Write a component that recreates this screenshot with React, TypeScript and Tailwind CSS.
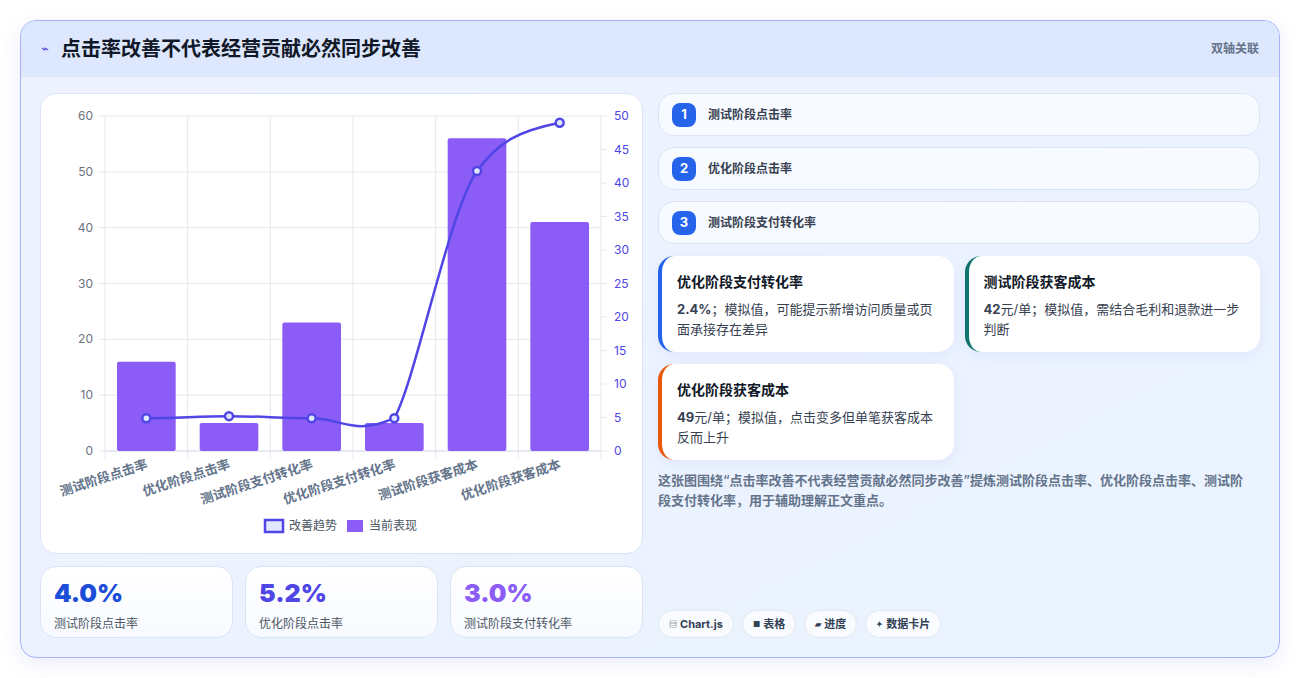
import React from 'react';

const font = { fontFamily: 'Inter, "Noto Sans CJK SC", sans-serif' };

const cats = ['测试阶段点击率', '优化阶段点击率', '测试阶段支付转化率', '优化阶段支付转化率', '测试阶段获客成本', '优化阶段获客成本'];
const bars = [16, 5, 23, 5, 56, 41];
const line = [4.9, 5.2, 4.9, 4.9, 41.8, 49];

const Chart = () => {
  // card-local coordinates
  const L = 64, R = 560, T = 22, B = 357;
  const cw = (R - L) / 6;
  const yl = (v: number) => B - (v / 60) * (B - T);
  const yr = (v: number) => B - (v / 50) * (B - T);
  const pts = line.map((v, i) => [L + cw * (i + 0.5), yr(v)]);
  const d =
    `M${pts[0][0]},${pts[0][1]} C${pts[0][0] + 30},${pts[0][1]} ${pts[1][0] - 30},${pts[1][1]} ${pts[1][0]},${pts[1][1]} ` +
    `C${pts[1][0] + 30},${pts[1][1]} ${pts[2][0] - 30},${pts[2][1]} ${pts[2][0]},${pts[2][1]} ` +
    `C${pts[2][0] + 30},${pts[2][1]} ${pts[3][0] - 40},${pts[3][1] + 18} ${pts[3][0]},${pts[3][1]} ` +
    `C${pts[3][0] + 22},${pts[3][1] - 40} ${pts[4][0] - 28},${pts[4][1] + 40} ${pts[4][0]},${pts[4][1]} ` +
    `C${pts[4][0] + 22},${pts[4][1] - 30} ${pts[5][0] - 40},${pts[5][1] + 8} ${pts[5][0]},${pts[5][1]}`;
  return (
    <svg width="602" height="460" className="block" style={font}>
      {[0, 10, 20, 30, 40, 50, 60].map((v) => (
        <g key={v}>
          <line x1={L} x2={R} y1={yl(v)} y2={yl(v)} stroke={v === 0 ? '#cbd5e1' : '#e5e7eb'} />
          <line x1={L - 6} x2={L} y1={yl(v)} y2={yl(v)} stroke="#e5e7eb" />
          <text x={L - 12} y={yl(v) + 4} textAnchor="end" fontSize="12" fill="#6b7280">{v}</text>
        </g>
      ))}
      {[0, 5, 10, 15, 20, 25, 30, 35, 40, 45, 50].map((v) => (
        <g key={v}>
          <line x1={R} x2={R + 6} y1={yr(v)} y2={yr(v)} stroke="#e5e7eb" />
          <text x={R + 13} y={yr(v) + 4} fontSize="12" fill="#4f46e5">{v}</text>
        </g>
      ))}
      {[0, 1, 2, 3, 4, 5, 6].map((i) => (
        <line key={i} x1={L + cw * i} x2={L + cw * i} y1={T} y2={B + 8} stroke="#e5e7eb" />
      ))}
      {bars.map((v, i) => (
        <rect key={i} x={L + cw * i + 12} y={yl(v)} width={cw - 24} height={B - yl(v)} fill="#8b5cf6" rx="2" />
      ))}
      <path d={d} fill="none" stroke="#4f46e5" strokeWidth="2.5" />
      {pts.map(([x, y], i) => (
        <circle key={i} cx={x} cy={y} r="4" fill="#e0e7ff" stroke="#4f46e5" strokeWidth="2.5" />
      ))}
      {cats.map((c, i) => (
        <text key={c} x={L + cw * (i + 0.5) + 2} y={B + 17} textAnchor="end" fontSize="13" fontWeight="600" fill="#64748b"
          transform={`rotate(-18 ${L + cw * (i + 0.5) + 2} ${B + 17})`}>{c}</text>
      ))}
      <rect x="224" y="426" width="18" height="12" fill="#e0e7ff" stroke="#4f46e5" strokeWidth="2.5" />
      <text x="248" y="436" fontSize="12" fill="#4b5563">改善趋势</text>
      <rect x="306" y="426" width="16" height="12" fill="#8b5cf6" />
      <text x="328" y="436" fontSize="12" fill="#4b5563">当前表现</text>
    </svg>
  );
};

const Stat = ({ v, l, c }: { v: string; l: string; c: string }) => (
  <div className="flex-1 h-[72px] rounded-2xl border border-[#dbe4f5] bg-gradient-to-b from-white to-[#f7faff] px-[13px] pt-[12px]">
    <div className={`text-[25px] leading-[28px] font-black ${c}`}>{v}</div>
    <div className="text-[12px] text-[#4b5563] mt-[8px]">{l}</div>
  </div>
);

const Step = ({ n, t }: { n: number; t: string }) => (
  <div className="h-[43px] rounded-2xl border border-[#dbe4f5] bg-[#f7faff] flex items-center px-[13px] gap-[12px]">
    <div className="w-[24px] h-[24px] rounded-lg bg-[#2563eb] text-white text-[13px] font-bold flex items-center justify-center">{n}</div>
    <div className="text-[12px] font-bold text-[#374151]">{t}</div>
  </div>
);

const Note = ({ t, b, s, c }: { t: string; b: string; s: string; c: string }) => (
  <div className={`h-[96px] rounded-2xl bg-white border-l-4 ${c} shadow-[0_4px_14px_rgba(99,102,241,0.08)] pl-[15px] pr-[14px] pt-[16px]`}>
    <div className="text-[14px] font-bold text-[#111827] leading-[20px]">{t}</div>
    <p className="text-[13px] text-[#374151] leading-[20px] mt-[7px]"><span className="font-bold">{b}</span>{s}</p>
  </div>
);

const Tag = ({ i, t }: { i: string; t: string }) => (
  <div className="h-[28px] rounded-full border border-[#e2e8f0] bg-white/70 px-[10px] flex items-center gap-[3px] text-[11px] font-bold text-[#334155]">
    <span className="text-[8px]">{i}</span>{t}
  </div>
);

export default function App() {
  return (
    <div className="w-[1300px] h-[678px] bg-white p-[20px]" style={font}>
      <div className="h-[638px] rounded-2xl border border-[#a5b4fc] overflow-hidden bg-gradient-to-br from-[#eef2ff] to-[#eaf3ff] shadow-[0_6px_20px_rgba(99,102,241,0.12)] flex flex-col">
        <div className="h-[56px] bg-[#dde7fd] flex items-center justify-between px-[20px] shrink-0">
          <div className="flex items-center gap-[12px]">
            <span className="text-[#4f46e5] text-[13px]">⌁</span>
            <span className="text-[20px] font-bold text-[#111827]">点击率改善不代表经营贡献必然同步改善</span>
          </div>
          <span className="text-[12px] font-semibold text-[#64748b]">双轴关联</span>
        </div>
        <div className="flex gap-[15px] px-[19px] pt-[16px]">
          <div className="w-[603px] flex flex-col gap-[12px]">
            <div className="h-[461px] rounded-2xl bg-white border border-[#dbe4f5] overflow-hidden">
              <Chart />
            </div>
            <div className="flex gap-[12px]">
              <Stat v="4.0%" l="测试阶段点击率" c="text-[#1d4ed8]" />
              <Stat v="5.2%" l="优化阶段点击率" c="text-[#4f46e5]" />
              <Stat v="3.0%" l="测试阶段支付转化率" c="text-[#8b5cf6]" />
            </div>
          </div>
          <div className="w-[603px] flex flex-col">
            <div className="flex flex-col gap-[11px]">
              <Step n={1} t="测试阶段点击率" />
              <Step n={2} t="优化阶段点击率" />
              <Step n={3} t="测试阶段支付转化率" />
            </div>
            <div className="grid grid-cols-2 gap-x-[11px] gap-y-[12px] mt-[12px]">
              <Note t="优化阶段支付转化率" b="2.4%" s="；模拟值，可能提示新增访问质量或页面承接存在差异" c="border-[#2563eb]" />
              <Note t="测试阶段获客成本" b="42" s="元/单；模拟值，需结合毛利和退款进一步判断" c="border-[#0f766e]" />
              <Note t="优化阶段获客成本" b="49" s="元/单；模拟值，点击变多但单笔获客成本反而上升" c="border-[#ea580c]" />
            </div>
            <p className="text-[13px] leading-[20px] text-[#64748b] font-semibold mt-[10px] pr-[4px]">
              这张图围绕“点击率改善不代表经营贡献必然同步改善”提炼测试阶段点击率、优化阶段点击率、测试阶段支付转化率，用于辅助理解正文重点。
            </p>
            <div className="flex gap-[8px] mt-[100px]">
              <Tag i="▤" t="Chart.js" />
              <Tag i="■" t="表格" />
              <Tag i="▰" t="进度" />
              <Tag i="✦" t="数据卡片" />
            </div>
          </div>
        </div>
      </div>
    </div>
  );
}
